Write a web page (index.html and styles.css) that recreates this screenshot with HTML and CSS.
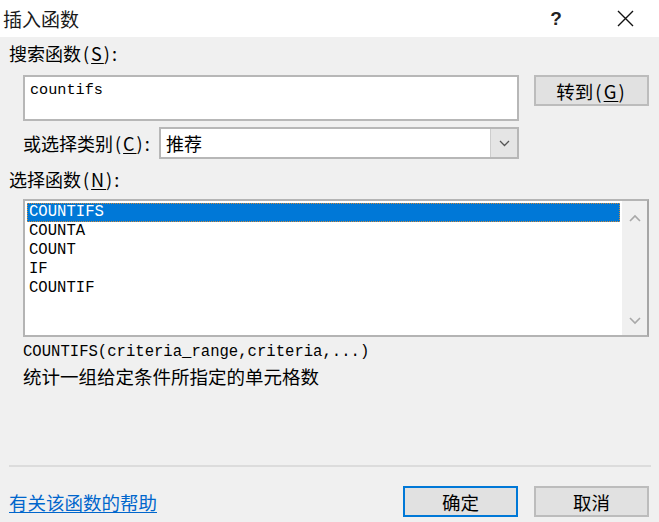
FILE: index.html
```html
<!DOCTYPE html>
<html lang="zh-CN">
<head>
<meta charset="utf-8">
<title>插入函数</title>
<link rel="stylesheet" href="styles.css">
</head>
<body>
<div class="dialog">
  <div class="titlebar">
    <span class="title">插入函数</span>
    <span class="help">?</span>
    <span class="close">
      <svg width="17" height="17" viewBox="0 0 17 17"><path d="M1 1 L16 16 M16 1 L1 16" stroke="#111" stroke-width="1.4" fill="none"/></svg>
    </span>
  </div>
  <div class="main">
    <div class="label">搜索函数<span class="mn">(<u>S</u>):</span></div>
    <div class="search-row">
      <div class="search-input">countifs</div>
      <div class="btn">转到<span class="mn">(<u>G</u>)</span></div>
    </div>
    <div class="cat-row">
      <span class="cat-label">或选择类别<span class="mn">(<u>C</u>):</span></span>
      <div class="select">
        <span class="select-value">推荐</span>
        <span class="select-drop">
          <svg width="11" height="7" viewBox="0 0 11 7"><path d="M1 1 L5.5 5.5 L10 1" stroke="#555" stroke-width="1.3" fill="none"/></svg>
        </span>
      </div>
    </div>
    <div class="label label-fn">选择函数<span class="mn">(<u>N</u>):</span></div>
    <div class="listbox">
      <div class="items">
        <div class="item selected">COUNTIFS</div>
        <div class="item">COUNTA</div>
        <div class="item">COUNT</div>
        <div class="item">IF</div>
        <div class="item">COUNTIF</div>
      </div>
      <div class="scrollbar">
        <svg width="12" height="8" viewBox="0 0 12 8"><path d="M1 7 L6 2 L11 7" stroke="#a8a8a8" stroke-width="1.6" fill="none"/></svg>
        <svg width="12" height="8" viewBox="0 0 12 8"><path d="M1 1 L6 6 L11 1" stroke="#a8a8a8" stroke-width="1.6" fill="none"/></svg>
      </div>
    </div>
    <div class="syntax">COUNTIFS(criteria_range,criteria,...)</div>
    <div class="desc">统计一组给定条件所指定的单元格数</div>
  </div>
  <div class="separator"></div>
  <div class="footer">
    <a class="help-link" href="#">有关该函数的帮助</a>
    <div class="btn btn-default">确定</div>
    <div class="btn btn-cancel">取消</div>
  </div>
</div>
</body>
</html>
```
FILE: styles.css
```css
html, body {
  margin: 0;
  padding: 0;
}
body {
  width: 659px;
  height: 522px;
  overflow: hidden;
  background: #f0f0f0;
  font-family: "Noto Sans CJK SC", "Noto Sans", sans-serif;
  font-size: 18px;
  color: #000;
}
u {
  text-decoration: underline;
  text-underline-offset: 2px;
  text-decoration-thickness: 1px;
}
.mn {
  letter-spacing: 2px;
  padding-left: 2px;
}
.dialog {
  width: 659px;
  height: 522px;
  display: flex;
  flex-direction: column;
}
.titlebar {
  height: 37px;
  flex: none;
  background: #fff;
  display: flex;
  align-items: center;
}
.title {
  padding-left: 3px;
  font-size: 19px;
  line-height: 24px;
  color: #1a1a1a;
}
.help {
  margin-left: auto;
  width: 46px;
  text-align: center;
  font-family: "Liberation Sans", sans-serif;
  font-weight: bold;
  font-size: 19px;
  color: #222;
}
.close {
  width: 46px;
  margin-left: 23px;
  margin-right: 11px;
  display: flex;
  justify-content: center;
  align-items: center;
}
.main {
  flex: 1;
  padding: 6px 10px 0 9px;
}
.label {
  height: 20px;
  line-height: 20px;
}
.search-row {
  display: flex;
  align-items: flex-start;
  gap: 15px;
  margin-top: 12px;
  padding-left: 14px;
}
.search-input {
  width: 496px;
  height: 46px;
  box-sizing: border-box;
  border: 2px solid #b7b7b7;
  background: #fff;
  font-family: "Liberation Mono", monospace;
  font-size: 15.2px;
  line-height: 19px;
  padding: 4px 0 0 5px;
}
.btn {
  width: 115px;
  height: 31px;
  box-sizing: border-box;
  border: 2px solid #bcbcbc;
  background: #e1e1e1;
  display: flex;
  align-items: center;
  justify-content: center;
  font-size: 18.5px;
  line-height: 22px;
}
.cat-row {
  display: flex;
  align-items: center;
  margin-top: 6px;
  padding-left: 14px;
}
.cat-label {
  width: 136px;
  flex: none;
  line-height: 22px;
  white-space: nowrap;
}
.select {
  width: 360px;
  height: 32px;
  box-sizing: border-box;
  border: 2px solid #b7b7b7;
  background: #fff;
  display: flex;
  align-items: stretch;
}
.select-value {
  flex: 1;
  padding-left: 5px;
  display: flex;
  align-items: center;
}
.select-drop {
  width: 26px;
  background: #e5e5e5;
  border-left: 1px solid #cdcdcd;
  display: flex;
  align-items: center;
  justify-content: center;
}
.label-fn {
  margin-top: 10px;
}
.listbox {
  margin-top: 10px;
  margin-left: 14px;
  width: 626px;
  height: 138px;
  box-sizing: border-box;
  border: 2px solid #b4b4b4;
  border-right-color: #a6a6a6;
  background: #fff;
  display: flex;
}
.items {
  flex: 1;
  padding: 2px 2px 0 2px;
}
.item {
  height: 19px;
  line-height: 19px;
  box-sizing: border-box;
  padding-left: 2px;
  font-family: "Liberation Mono", monospace;
  font-size: 15.6px;
  color: #000;
}
.selected {
  background: #0078d7;
  color: #fff;
  border: 1px dotted #d08a3a;
  padding-left: 1px;
  line-height: 17px;
}
.scrollbar {
  width: 25px;
  flex: none;
  background: #f0f0f0;
  display: flex;
  flex-direction: column;
  align-items: center;
  justify-content: space-between;
  padding: 13px 0 10px;
  box-sizing: border-box;
}
.syntax {
  margin-top: 6px;
  margin-left: 14px;
  font-family: "Liberation Mono", monospace;
  font-size: 15.6px;
  line-height: 19px;
}
.desc {
  margin-top: 3px;
  margin-left: 14px;
  font-size: 18.5px;
  line-height: 22px;
}
.separator {
  flex: none;
  height: 2px;
  margin: 0 8px 0 9px;
  background: #dcdcdc;
}
.footer {
  flex: none;
  display: flex;
  align-items: center;
  gap: 16px;
  padding: 19px 10px 5px 9px;
}
.help-link {
  margin-right: auto;
  color: #0066cc;
  font-size: 18.5px;
  line-height: 22px;
  text-decoration: underline;
  text-underline-offset: 2px;
}
.btn-default {
  border-color: #0078d7;
}
```
